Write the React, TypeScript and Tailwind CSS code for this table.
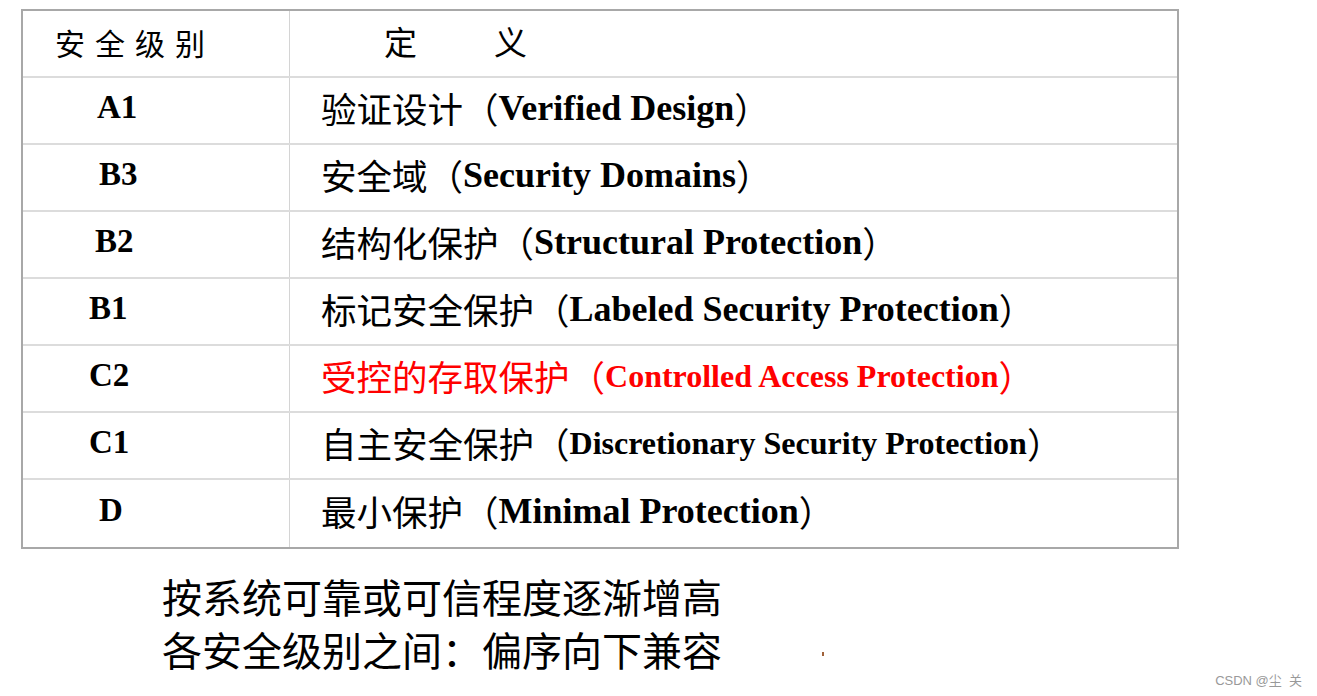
import React from "react";

const rows: { lv: string; lvPad: string; zh: string; en: string; red?: boolean; small?: boolean }[] = [
  { lv: "A1", lvPad: "pl-[74px]", zh: "验证设计", en: "Verified Design" },
  { lv: "B3", lvPad: "pl-[76px]", zh: "安全域", en: "Security Domains" },
  { lv: "B2", lvPad: "pl-[72px]", zh: "结构化保护", en: "Structural Protection" },
  { lv: "B1", lvPad: "pl-[66px]", zh: "标记安全保护", en: "Labeled Security Protection" },
  { lv: "C2", lvPad: "pl-[66px]", zh: "受控的存取保护", en: "Controlled Access Protection", red: true, small: true },
  { lv: "C1", lvPad: "pl-[66px]", zh: "自主安全保护", en: "Discretionary Security Protection", small: true },
  { lv: "D", lvPad: "pl-[76px]", zh: "最小保护", en: "Minimal Protection" },
];

const cjk = "font-['Noto_Sans_CJK_SC',sans-serif]";
const serif = "font-['Liberation_Serif','Noto_Sans_CJK_SC',serif]";

export default function App() {
  return (
    <div className="w-[1317px] h-[696px] bg-white overflow-hidden flex flex-col relative">
      <div className="ml-[21px] mt-[9px] w-[1158px] border-2 border-[#a8a8a8] flex flex-col">
        <div className="flex h-[67px] border-b-2 border-[#dcdcdc]">
          <div className={`w-[267px] border-r border-[#d4d4d4] flex items-center pl-[32px] pb-[3px] text-[30px] tracking-[10px] text-black ${cjk}`}>
            安全级别
          </div>
          <div className={`flex-1 flex items-center pl-[94px] pb-[3px] text-[33px] text-black ${cjk}`}>
            <span>定</span>
            <span className="ml-[77px]">义</span>
          </div>
        </div>
        {rows.map((r, i) => (
          <div key={r.lv} className={`flex h-[67px] ${i < rows.length - 1 ? "border-b-2 border-[#dcdcdc]" : ""}`}>
            <div className={`w-[267px] border-r border-[#d4d4d4] flex items-center ${r.lvPad} pb-[6px] text-[33px] font-bold text-black ${serif}`}>
              {r.lv}
            </div>
            <div className={`flex-1 flex items-center pl-[31px] pb-[6px] whitespace-nowrap leading-none ${r.red ? "text-[#ff0000]" : "text-black"}`}>
              <span className={`text-[35.5px] ${cjk}`}>{r.zh}（</span>
              <span className={`${r.small ? "text-[32px]" : "text-[36px]"} font-bold ${serif}`}>{r.en}</span>
              <span className={`text-[35.5px] ${cjk}`}>）</span>
            </div>
          </div>
        ))}
      </div>
      <div className={`ml-[162px] mt-[21px] text-[40px] leading-[53px] text-black ${cjk}`}>
        <div>按系统可靠或可信程度逐渐增高</div>
        <div className="flex items-center">
          <span>各安全级别之间：偏序向下兼容</span>
          <span className="ml-[100px] mt-[8px] w-[2px] h-[4px] bg-[#a0623a]"></span>
        </div>
      </div>
      <div className="absolute right-[15px] bottom-[6px] text-[13px] text-[#999999] whitespace-pre font-['Liberation_Sans','Noto_Sans_CJK_SC',sans-serif]">
        CSDN @尘  关
      </div>
    </div>
  );
}
